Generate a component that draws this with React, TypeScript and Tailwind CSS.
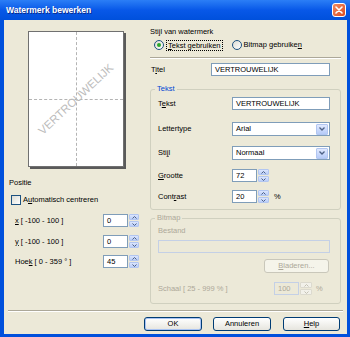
import React from 'react';

const U = ({ children }: { children: React.ReactNode }) => (
  <span className="underline underline-offset-[1px]">{children}</span>
);

function Spin({ w = 'w-[10px]', disabled = false }: { w?: string; disabled?: boolean }) {
  const box = disabled
    ? 'bg-[#f2f1ea] border-[#dcdacf]'
    : 'bg-linear-to-b from-[#dbe5fd] to-[#b9cdf8] border-[#b2c6f1]';
  const stroke = disabled ? '#c3c0b2' : '#4d6185';
  return (
    <div className={`ml-[1px] flex h-full flex-col gap-[1px] ${w}`}>
      <div className={`flex flex-1 items-center justify-center rounded-[1px] border ${box}`}>
        <svg width="5" height="3" viewBox="0 0 5 3">
          <polyline points="0.5,2.5 2.5,0.5 4.5,2.5" fill="none" stroke={stroke} strokeWidth="1" />
        </svg>
      </div>
      <div className={`flex flex-1 items-center justify-center rounded-[1px] border ${box}`}>
        <svg width="5" height="3" viewBox="0 0 5 3">
          <polyline points="0.5,0.5 2.5,2.5 4.5,0.5" fill="none" stroke={stroke} strokeWidth="1" />
        </svg>
      </div>
    </div>
  );
}

function Field({ value, className = '', disabled = false }: { value: string; className?: string; disabled?: boolean }) {
  return (
    <div
      className={`flex h-full items-center border px-[3px] ${
        disabled ? 'border-[#c4d0e6] bg-[#ece9d8] text-[#aca899]' : 'border-[#7f9db9] bg-white text-black'
      } ${className}`}
    >
      {value}
    </div>
  );
}

function Select({ value }: { value: string }) {
  return (
    <div className="flex h-full flex-1 items-center border border-[#7f9db9] bg-white pl-[3px] pr-[1px]">
      <span className="flex-1">{value}</span>
      <div className="flex h-[11px] w-[12px] items-center justify-center rounded-[1px] border border-[#b2c6f1] bg-linear-to-b from-[#e1e9fe] to-[#b6cbf8]">
        <svg width="6" height="4" viewBox="0 0 6 4">
          <polyline points="0.5,0.5 3,3 5.5,0.5" fill="none" stroke="#4d6185" strokeWidth="1.3" />
        </svg>
      </div>
    </div>
  );
}

function Radio({ checked }: { checked: boolean }) {
  return (
    <div className="flex h-[10px] w-[10px] items-center justify-center rounded-full border border-[#1c5180] bg-linear-to-br from-[#dcdcd4] to-white">
      {checked && <div className="h-[4px] w-[4px] rounded-full bg-[#2aa82a]" />}
    </div>
  );
}

function Button({ children, w, primary = false, disabled = false }: { children: React.ReactNode; w: string; primary?: boolean; disabled?: boolean }) {
  return (
    <div
      className={`flex h-[14px] items-center justify-center rounded-[3px] border ${w} ${
        disabled
          ? 'border-[#c9c7ba] bg-[#f5f4ea] text-[#aca899]'
          : 'border-[#003c74] bg-linear-to-b from-white to-[#e6e5de] text-black'
      } ${primary ? 'shadow-[inset_0_0_0_1px_#a9c3f3]' : ''}`}
    >
      {children}
    </div>
  );
}

function Etched({ className = '' }: { className?: string }) {
  return <div className={`h-[2px] border-t border-b border-t-[#aca899] border-b-white ${className}`} />;
}

export default function App() {
  return (
    <div className="flex h-[337px] w-[350px] select-none flex-col overflow-hidden bg-[#0050dc] font-['Liberation_Sans',Arial,sans-serif] text-[7.5px] leading-[10px] text-black">
      {/* Title bar */}
      <div className="flex h-[20px] items-center bg-linear-to-b from-[#2b7ef6] via-[#0858e8] to-[#0050dc] pl-[6px] pr-[4px]">
        <span className="flex-1 text-[8.5px] font-bold text-white [text-shadow:1px_1px_0_#0a2a8a]">Watermerk bewerken</span>
        <div className="flex h-[14px] w-[14px] items-center justify-center rounded-[3px] border border-white bg-linear-to-br from-[#f08a60] to-[#dc4a20]">
          <svg width="8" height="8" viewBox="0 0 8 8">
            <path d="M1 1 L7 7 M7 1 L1 7" stroke="white" strokeWidth="1.6" strokeLinecap="round" />
          </svg>
        </div>
      </div>

      {/* Body */}
      <div className="mb-[3px] ml-[4px] mr-[3px] flex flex-1 flex-col bg-[#ece9d8]">
        <div className="flex">
          {/* Left column */}
          <div className="flex w-[146px] flex-col">
            <div className="relative ml-[24px] mt-[11px] h-[136px] w-[96px] overflow-hidden border border-[#707070] bg-white shadow-[2px_2px_0_#5a5a5a]">
              <div className="absolute bottom-0 left-1/2 top-0 border-l border-dashed border-[#b4b4b4]" />
              <div className="absolute left-0 right-0 top-1/2 border-t border-dashed border-[#b4b4b4]" />
              <div className="absolute inset-0 flex items-center justify-center">
                <span className="-rotate-[43deg] whitespace-nowrap text-[11.5px] text-[#bcbcbc]">VERTROUWELIJK</span>
              </div>
            </div>

            <div className="ml-[5px] mt-[11px] h-[10px]">Positie</div>

            <div className="ml-[7px] mt-[7px] flex h-[10px] items-center gap-[2px]">
              <div className="h-[10px] w-[10px] border border-[#1c5180] bg-linear-to-br from-[#dcdcd4] to-white" />
              <span>
                A<U>u</U>tomatisch centreren
              </span>
            </div>

            <div className="ml-[11px] mt-[9px] flex h-[13px] items-center">
              <span className="w-[88px]">
                <U>x</U> [ -100 - 100 ]
              </span>
              <Field value="0" className="w-[25px]" />
              <Spin />
            </div>
            <div className="ml-[11px] mt-[8px] flex h-[13px] items-center">
              <span className="w-[88px]">
                <U>y</U> [ -100 - 100 ]
              </span>
              <Field value="0" className="w-[25px]" />
              <Spin />
            </div>
            <div className="ml-[11px] mt-[7px] flex h-[13px] items-center">
              <span className="w-[88px]">
                Hoe<U>k</U> [ 0 - 359 ° ]
              </span>
              <Field value="45" className="w-[25px]" />
              <Spin />
            </div>
          </div>

          {/* Right column */}
          <div className="flex w-[191px] flex-col">
            <div className="mt-[7px] h-[10px]">Stijl van watermerk</div>
            <div className="mt-[2px] flex h-[12px] items-center">
              <div className="ml-[4px]">
                <Radio checked />
              </div>
              <span className="ml-[2px] border border-dotted border-black px-[1px] leading-[9px]">
                <U>T</U>ekst gebruiken
              </span>
              <div className="ml-[9px]">
                <Radio checked={false} />
              </div>
              <span className="ml-[2px]">
                Bitmap gebruike<U>n</U>
              </span>
            </div>

            <Etched className="mt-[6px]" />

            <div className="mt-[4px] flex h-[13px] items-center">
              <span className="ml-[1px] w-[60px]">
                T<U>i</U>tel
              </span>
              <Field value="VERTROUWELIJK" className="w-[119px]" />
            </div>

            {/* Tekst group */}
            <fieldset className="mt-[8px] rounded-[3px] border border-[#d0d0bf] pb-[6px]">
              <legend className="ml-[4px] px-[2px] leading-[10px] text-[#0046d5]">Tekst</legend>
              <div className="mt-[3px] flex h-[13px] items-center pl-[7px] pr-[10px]">
                <span className="w-[74px]">
                  T<U>e</U>kst
                </span>
                <Field value="VERTROUWELIJK" className="flex-1" />
              </div>
              <div className="mt-[12px] flex h-[14px] items-center pl-[7px] pr-[10px]">
                <span className="w-[74px]">Lettertype</span>
                <Select value="Arial" />
              </div>
              <div className="mt-[10px] flex h-[14px] items-center pl-[7px] pr-[10px]">
                <span className="w-[74px]">
                  Sti<U>j</U>l
                </span>
                <Select value="Normaal" />
              </div>
              <div className="mt-[9px] flex h-[13px] items-center pl-[7px] pr-[10px]">
                <span className="w-[74px]">
                  <U>G</U>rootte
                </span>
                <Field value="72" className="w-[25px]" />
                <Spin w="w-[11px]" />
              </div>
              <div className="mt-[8px] flex h-[13px] items-center pl-[7px] pr-[10px]">
                <span className="w-[74px]">
                  Cont<U>r</U>ast
                </span>
                <Field value="20" className="w-[25px]" />
                <Spin w="w-[11px]" />
                <span className="ml-[5px]">%</span>
              </div>
            </fieldset>

            {/* Bitmap group */}
            <fieldset className="mt-[3px] rounded-[3px] border border-[#d0d0bf] pb-[8px] text-[#aca899]">
              <legend className="ml-[4px] px-[2px] leading-[10px]">Bitmap</legend>
              <div className="mt-[3px] h-[10px] pl-[7px]">Bestand</div>
              <div className="mt-[4px] flex h-[13px] pl-[7px] pr-[10px]">
                <Field value="" className="flex-1" disabled />
              </div>
              <div className="mt-[6px] flex justify-end pr-[11px]">
                <Button w="w-[65px]" disabled>
                  <span>
                    <U>B</U>laderen...
                  </span>
                </Button>
              </div>
              <div className="mt-[9px] flex h-[13px] items-center pl-[7px]">
                <span className="w-[116px]">Schaal [ 25 - 999 % ]</span>
                <Field value="100" className="w-[25px]" disabled />
                <Spin w="w-[12px]" disabled />
                <span className="ml-[4px]">%</span>
              </div>
            </fieldset>
          </div>
        </div>

        <Etched className="mx-[4px] mt-[6px]" />

        <div className="mt-[5px] flex justify-end pr-[7px]">
          <Button w="w-[58px]" primary>
            OK
          </Button>
          <div className="ml-[11px]">
            <Button w="w-[58px]">Annuleren</Button>
          </div>
          <div className="ml-[12px]">
            <Button w="w-[57px]">
              <span>
                <U>H</U>elp
              </span>
            </Button>
          </div>
        </div>
      </div>
    </div>
  );
}
